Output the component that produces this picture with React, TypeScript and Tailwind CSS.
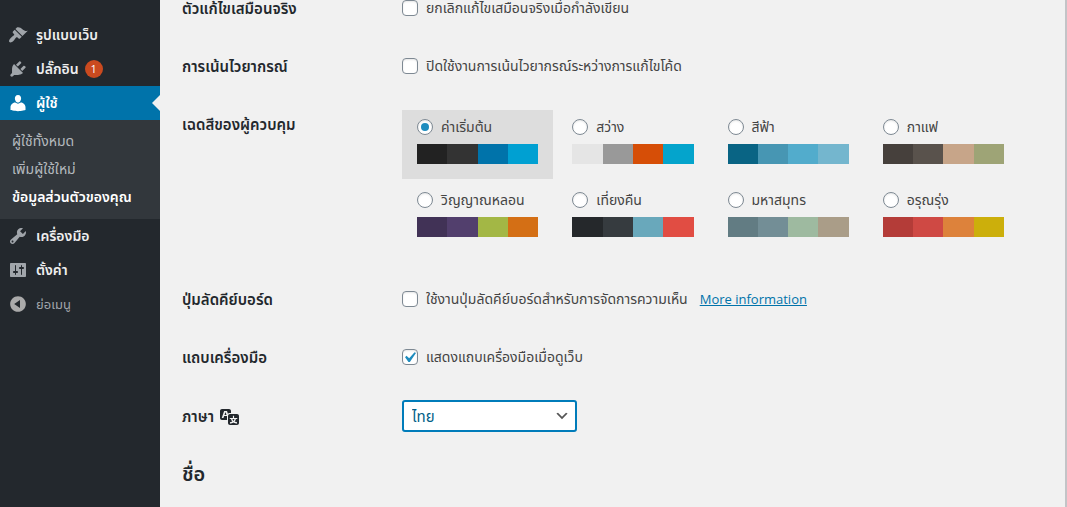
import { ReactNode } from 'react';

const icons = {
  appearance:
    'M14.48 11.06L7.41 3.99l1.5-1.5c.5-.56 2.3-.47 3.51.32 1.21.8 1.43 1.28 2.91 2.1 1.18.64 2.45 1.26 4.45.85zm-.71.71L6.7 4.7 4.93 6.47c-.39.39-.39 1.02 0 1.41l1.06 1.06c.39.39.39 1.03 0 1.42-.6.6-1.43 1.11-2.21 1.69-.35.26-.7.53-1.01.84C1.43 14.23.4 16.08 1.4 17.07c.99 1 2.84-.03 4.18-1.36.31-.31.58-.66.85-1.02.57-.78 1.08-1.61 1.69-2.21.39-.39 1.02-.39 1.41 0l1.06 1.06c.39.39 1.02.39 1.41 0z',
  plugins:
    'M13.11 4.36L9.87 7.6 8 5.73l3.24-3.24c.35-.34 1.05-.2 1.56.32.52.51.66 1.21.31 1.55zm-8 1.77l.91-1.12 9.01 9.01-1.19.84c-.71.71-2.63 1.16-3.82 1.16H6.14L4.9 17.26c-.59.59-1.54.59-2.12 0-.59-.58-.59-1.53 0-2.12l1.24-1.24v-3.88c0-1.13.4-3.19 1.09-3.89zm7.26 3.97l3.24-3.24c.34-.35 1.04-.21 1.55.31.52.51.66 1.21.31 1.55l-3.24 3.25z',
  users:
    'M10 9.6c-2.5 0-3.1-3.6-3.1-3.8C6.7 3.9 7.7 2 10 2s3.3 1.9 3.1 3.8c0 .2-.6 3.8-3.1 3.8zm0 1.1L12.9 9.6c2.5 0 4.6 2.4 4.6 4.7v2.8s-3.8 1.1-7.5 1.1-7.5-1.1-7.5-1.1v-2.8c0-2.3 2.1-4.7 4.6-4.7z',
  tools:
    'M16.68 9.77c-1.34 1.34-3.3 1.67-4.95.99l-5.41 6.52c-.99.99-2.59.99-3.58 0s-.99-2.59 0-3.57l6.52-5.42c-.68-1.65-.35-3.61.99-4.95 1.28-1.28 3.12-1.62 4.72-1.06l-2.89 2.89 2.82 2.82 2.86-2.87c.53 1.58.18 3.39-1.08 4.65zM3.81 16.21c.4.39 1.04.39 1.43 0 .4-.4.4-1.04 0-1.43-.39-.4-1.03-.4-1.43 0-.39.39-.39 1.03 0 1.43z',
  settings:
    'M18 16V4c0-.55-.45-1-1-1H3c-.55 0-1 .45-1 1v12c0 .55.45 1 1 1h14c.55 0 1-.45 1-1zM8 11h1c.55 0 1 .45 1 1s-.45 1-1 1H8v1.5c0 .28-.22.5-.5.5s-.5-.22-.5-.5V13H6c-.55 0-1-.45-1-1s.45-1 1-1h1V5.5c0-.28.22-.5.5-.5s.5.22.5.5V11zm5-2h-1c-.55 0-1-.45-1-1s.45-1 1-1h1V5.5c0-.28.22-.5.5-.5s.5.22.5.5V7h1c.55 0 1 .45 1 1s-.45 1-1 1h-1v5.5c0 .28-.22.5-.5.5s-.5-.22-.5-.5V9z',
  collapse:
    'M10 2.16c4.33 0 7.84 3.51 7.84 7.84s-3.51 7.84-7.84 7.84S2.16 14.33 2.16 10 5.71 2.16 10 2.16zm2 11.72V6.12L6.18 9.97z',
  translation:
    'M11 7H9.49c-.63 0-1.25.3-1.59.7L7 5H4.13l-2.39 7h1.69l.74-2H7v4H2c-1.1 0-2-.9-2-2V5c0-1.1.9-2 2-2h7c1.1 0 2 .9 2 2v2zM6.51 9H4.49l1-2.93zM10 8h7c1.1 0 2 .9 2 2v7c0 1.1-.9 2-2 2h-7c-1.1 0-2-.9-2-2v-7c0-1.1.9-2 2-2zm7.25 5v-1.08h-3.17V9.75h-1.16v2.17H9.75V13h1.28c.11.85.56 1.85 1.28 2.62-.87.36-1.89.62-2.31.62-.01.02.22.97.2 1.46.84 0 2.21-.5 3.28-1.15 1.09.65 2.48 1.15 3.34 1.15-.02-.49.2-1.44.2-1.46-.43 0-1.49-.27-2.38-.63.7-.77 1.14-1.77 1.25-2.61h1.36zm-3.81 1.93c-.5-.46-.85-1.13-1.01-1.93h2.09c-.17.8-.51 1.47-1 1.93l-.04.03s-.03-.02-.04-.03z',
  check: 'M14.83 4.89l1.34.94-5.81 8.38H9.02L5.78 9.67l1.34-1.25 2.57 2.4z',
  chevron: 'M5 6l5 5 5-5 2 1-7 7-7-7 2-1z',
};

const schemes = [
  { id: 'fresh', name: 'ค่าเริ่มต้น', colors: ['#222222', '#333333', '#0073aa', '#00a0d2'] },
  { id: 'light', name: 'สว่าง', colors: ['#e5e5e5', '#999999', '#d64e07', '#04a4cc'] },
  { id: 'blue', name: 'สีฟ้า', colors: ['#096484', '#4796b3', '#52accc', '#74b6ce'] },
  { id: 'coffee', name: 'กาแฟ', colors: ['#46403c', '#59524c', '#c7a589', '#9ea476'] },
  { id: 'ectoplasm', name: 'วิญญาณหลอน', colors: ['#413256', '#523f6d', '#a3b745', '#d46f15'] },
  { id: 'midnight', name: 'เที่ยงคืน', colors: ['#25282b', '#363b3f', '#69a8bb', '#e14d43'] },
  { id: 'ocean', name: 'มหาสมุทร', colors: ['#627c83', '#738e96', '#9ebaa0', '#aa9d88'] },
  { id: 'sunrise', name: 'อรุณรุ่ง', colors: ['#b43c38', '#cf4944', '#dd823b', '#ccaf0b'] },
];

const Icon = ({ path, className = '' }: { path: string; className?: string }) => (
  <svg className={`size-5 shrink-0 ${className}`} viewBox="0 0 20 20" fill="currentColor" aria-hidden="true">
    <path d={path} />
  </svg>
);

interface MenuItemProps {
  icon: string;
  label: string;
  badge?: number;
  current?: boolean;
}

const MenuItem = ({ icon, label, badge, current }: MenuItemProps) => (
  <a
    href="#"
    className={`relative flex h-[34px] items-center gap-2 px-2 font-semibold ${
      current ? 'bg-[#0073aa] text-white' : 'text-[#eeeeee]'
    }`}
  >
    <Icon path={icon} className={current ? 'text-white' : 'text-[#a0a5aa]'} />
    <span className="flex items-center gap-1.5">
      {label}
      {badge && (
        <span className="flex size-[18px] items-center justify-center rounded-full bg-[#ca4a1f] text-[11px] font-normal text-white">
          {badge}
        </span>
      )}
    </span>
    {current && (
      <span className="absolute top-[9px] right-0 border-8 border-transparent border-r-[#f1f1f1]" />
    )}
  </a>
);

const Sidebar = () => (
  <nav className="w-40 shrink-0 bg-[#23282d] pt-[18px] text-sm">
    <MenuItem icon={icons.appearance} label="รูปแบบเว็บ" />
    <MenuItem icon={icons.plugins} label="ปลั๊กอิน" badge={1} />
    <MenuItem icon={icons.users} label="ผู้ใช้" current />
    <div className="flex flex-col bg-[#32373c] px-3 pt-[7px] pb-2 text-[#b4b9be]">
      <a href="#" className="flex h-7 items-center">ผู้ใช้ทั้งหมด</a>
      <a href="#" className="flex h-7 items-center">เพิ่มผู้ใช้ใหม่</a>
      <a href="#" className="flex h-7 items-center font-semibold whitespace-nowrap text-white">
        ข้อมูลส่วนตัวของคุณ
      </a>
    </div>
    <MenuItem icon={icons.tools} label="เครื่องมือ" />
    <MenuItem icon={icons.settings} label="ตั้งค่า" />
    <button type="button" className="flex h-[34px] w-full items-center gap-2 px-2 text-[13px] text-[#a0a5aa]">
      <Icon path={icons.collapse} className="text-[#aaaaaa]" />
      ย่อเมนู
    </button>
  </nav>
);

interface RowProps {
  label: ReactNode;
  children: ReactNode;
  className?: string;
}

const Row = ({ label, children, className = 'h-[58px] items-center leading-5' }: RowProps) => (
  <div className={`flex ${className}`}>
    <div className="w-[220px] shrink-0 text-[15px] font-semibold text-[#23282d]">{label}</div>
    <div className="flex min-w-0 flex-1 items-center gap-3">{children}</div>
  </div>
);

const Checkbox = ({ label, defaultChecked }: { label: string; defaultChecked?: boolean }) => (
  <label className="flex items-center gap-2">
    <span className="relative flex size-4 shrink-0">
      <input
        type="checkbox"
        defaultChecked={defaultChecked}
        className="peer size-4 appearance-none rounded border border-[#7e8993] bg-white shadow-[inset_0_1px_2px_rgba(0,0,0,0.1)]"
      />
      <svg
        className="pointer-events-none absolute -top-0.5 -left-[3px] hidden size-[21px] text-[#1e8cbe] peer-checked:block"
        viewBox="0 0 20 20"
        fill="currentColor"
        aria-hidden="true"
      >
        <path d={icons.check} />
      </svg>
    </span>
    {label}
  </label>
);

const ColorSchemes = () => (
  <div className="grid max-w-[617px] flex-1 grid-cols-4 gap-1">
    {schemes.map((scheme) => (
      <label key={scheme.id} className="block px-[15px] pb-[15px] has-checked:bg-[#dddddd]">
        <span className="flex h-[34px] items-center gap-2">
          <input
            type="radio"
            name="admin_color"
            value={scheme.id}
            defaultChecked={scheme.id === 'fresh'}
            className="flex size-4 shrink-0 appearance-none items-center justify-center rounded-full border border-[#7e8993] bg-white shadow-[inset_0_1px_2px_rgba(0,0,0,0.1)] before:size-2 before:rounded-full checked:before:bg-[#1e8cbe]"
          />
          {scheme.name}
        </span>
        <span className="flex h-5">
          {scheme.colors.map((color) => (
            <span key={color} className="flex-1" style={{ backgroundColor: color }} />
          ))}
        </span>
      </label>
    ))}
  </div>
);

const App = () => (
  <div className="flex min-h-screen bg-[#f1f1f1] font-['Open_Sans','Noto_Sans_Thai','Noto_Sans',sans-serif] text-sm text-[#444444]">
    <Sidebar />
    <main className="min-w-0 flex-1 border-r-2 border-[#c3c4c7] pl-[22px]">
      <Row label="ตัวแก้ไขเสมือนจริง" className="h-[37px] items-start leading-4">
        <Checkbox label="ยกเลิกแก้ไขเสมือนจริงเมื่อกำลังเขียน" />
      </Row>
      <Row label="การเน้นไวยากรณ์">
        <Checkbox label="ปิดใช้งานการเน้นไวยากรณ์ระหว่างการแก้ไขโค้ด" />
      </Row>
      <Row label="เฉดสีของผู้ควบคุม" className="items-start pb-[18px] leading-[58px]">
        <div className="flex flex-1 pt-[15px] leading-5">
          <ColorSchemes />
        </div>
      </Row>
      <Row label="ปุ่มลัดคีย์บอร์ด">
        <Checkbox label="ใช้งานปุ่มลัดคีย์บอร์ดสำหรับการจัดการความเห็น" />
        <a href="#" className="text-[13px] text-[#0073aa] underline">More information</a>
      </Row>
      <Row label="แถบเครื่องมือ">
        <Checkbox label="แสดงแถบเครื่องมือเมื่อดูเว็บ" defaultChecked />
      </Row>
      <Row
        label={
          <label htmlFor="locale" className="flex items-center gap-1.5">
            ภาษา
            <Icon path={icons.translation} />
          </label>
        }
        className="h-[60px] items-center leading-5"
      >
        <div className="relative w-[175px]">
          <select
            id="locale"
            className="h-8 w-full appearance-none rounded-[3px] border-2 border-[#007cba] bg-white pr-6 pl-2 text-[15px] text-[#016087] outline-none"
          >
            <option>ไทย</option>
          </select>
          <svg
            className="pointer-events-none absolute top-2 right-[7px] size-4 text-[#555555]"
            viewBox="0 0 20 20"
            fill="currentColor"
            aria-hidden="true"
          >
            <path d={icons.chevron} />
          </svg>
        </div>
      </Row>
      <h2 className="pt-3.5 text-xl font-semibold text-[#23282d]">ชื่อ</h2>
    </main>
  </div>
);

export default App;
